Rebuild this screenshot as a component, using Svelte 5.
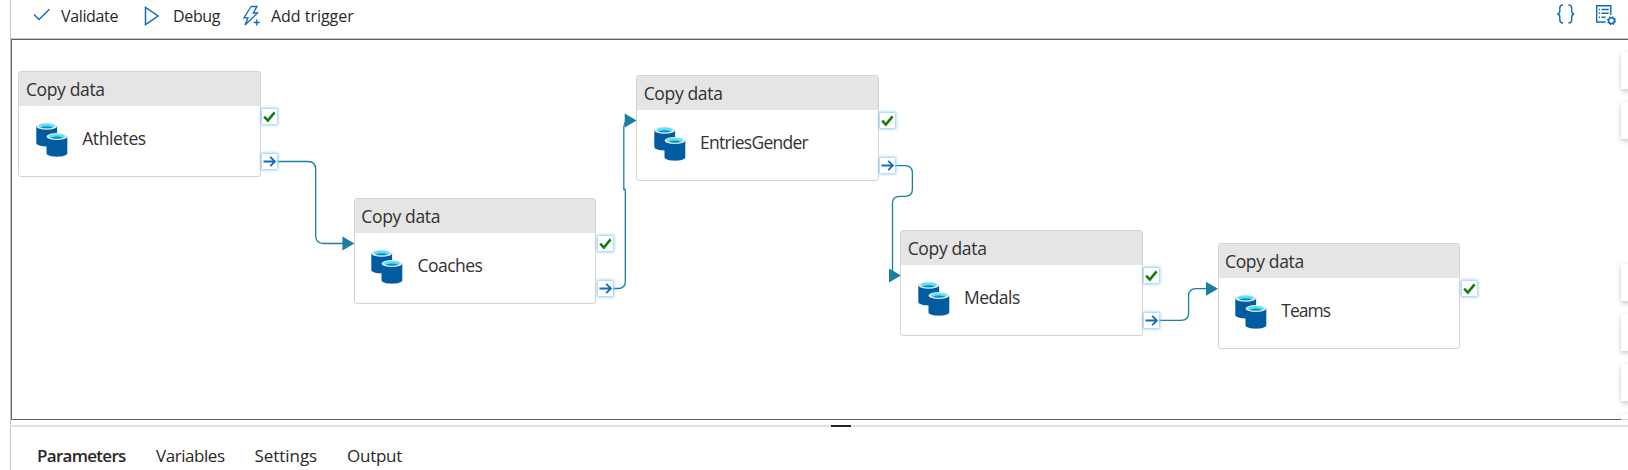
<script>
  const nodes = [
    { name: 'Athletes', x: 18.4, y: 71.3, next: true, track: '-0.38px' },
    { name: 'Coaches', x: 353.8, y: 198.4, next: true, track: '-0.55px' },
    { name: 'EntriesGender', x: 636.2, y: 75.2, next: true, track: '-0.72px' },
    { name: 'Medals', x: 900.2, y: 230.4, next: true, track: '-0.5px' },
    { name: 'Teams', x: 1217.5, y: 243.2, next: false, track: '-1px' }
  ];
  const edges = [
    'M278 161.5H308Q315.7 161.5 315.7 169.5V235.5Q315.7 243.5 323.7 243.5H343',
    'M613 288.5H618Q625.3 288.5 625.3 281V189.5H623.8V128Q623.8 122 628 120.5',
    'M895 165.6H905Q912.4 165.6 912.4 173V189Q912.4 196.4 905 196.4H899.5Q892.5 196.4 892.5 203.5V275',
    'M1159 320.4H1181Q1188.6 320.4 1188.6 313V296Q1188.6 288.6 1196 288.6H1207'
  ];
  const heads = [[342.4, 243.6], [624.7, 120.5], [889, 275.6], [1206, 288.7]];
  const cards = [52, 101.5, 264, 314, 364];
  const tabs = [
    { label: 'Parameters', w: 119, track: '-0.7px' },
    { label: 'Variables', w: 98.5, track: '-0.45px' },
    { label: 'Settings', w: 92.5, track: '-0.05px' },
    { label: 'Output', w: 60, track: '-0.25px' }
  ];
</script>

<div class="page">
  <header class="toolbar">
    <button class="validate">
      <svg width="18" height="14" viewBox="0 0 18 14"><path d="M1 6.5 6 11.5 16.5 1.2" stroke-width="1.4" /></svg>
      <span>Validate</span>
    </button>
    <button class="debug">
      <svg width="16" height="20" viewBox="0 0 16 20"><path d="M1.5 1.4V18.6L14 10Z" stroke-width="1.5" /></svg>
      <span>Debug</span>
    </button>
    <button class="trigger">
      <svg width="20" height="22" viewBox="0 0 20 22"><path d="M9 1.5H15L11.2 8H15.5L3 20 6 12.8H2L9 1.5M14.7 14.5V20.5M11.7 17.5H17.7" stroke-width="1.3" /></svg>
      <span>Add trigger</span>
    </button>
    <div class="tools">
      <svg width="20" height="20" viewBox="0 0 20 20"><path d="M7 1Q3.8 1 3.8 4V7Q3.8 9.7 1.4 10Q3.8 10.3 3.8 13V16Q3.8 19 7 19M12.5 1Q15.7 1 15.7 4V7Q15.7 9.7 18.1 10Q15.7 10.3 15.7 13V16Q15.7 19 12.5 19" stroke-width="1.4" /></svg>
      <svg width="22" height="22" viewBox="0 0 22 22">
        <path d="M10.5 18H1.7V1.7H15.8V11M3.8 5.5H5M6.5 5.5H13.7M3.8 9.3H5M6.5 9.3H13.7M3.8 13.2H5M6.5 13.2H10.5" stroke-width="1.4" />
        <circle cx="16.5" cy="16.7" r="2.9" stroke-width="1.5" />
        <circle cx="16.5" cy="16.7" r="3.9" stroke-width="1.3" stroke-dasharray="1.5 1.563" />
      </svg>
    </div>
  </header>

  <main class="canvas">
    <svg class="edges" width="1628" height="470" viewBox="0 0 1628 470">
      {#each edges as d}<path {d} />{/each}
      {#each heads as [x, y]}<polygon points="{x},{y - 7} {x + 12},{y} {x},{y + 7}" />{/each}
    </svg>
    {#each nodes as n}
      <article class="node" style="left:{n.x}px; top:{n.y}px">
        <h2>Copy data</h2>
        <div class="body">
          <svg width="32" height="36" viewBox="0 0 32 36">
            {#each [[0.3, 0.5], [10.5, 10.8]] as [x, y]}
              <g transform="translate({x} {y})">
                <path d="M0 3.5V20.5C0 25 20.8 25 20.8 20.5V3.5Z" fill="#005ba1" />
                <ellipse cx="10.4" cy="3.7" rx="10.4" ry="3.6" fill="#e8e8e8" />
                <ellipse cx="10.4" cy="3.5" rx="8" ry="2.4" fill="#50e6ff" />
                <path d="M4 4.9Q10.4 2.4 16.8 4.9Q10.4 6.8 4 4.9Z" fill="#198ab3" />
              </g>
            {/each}
          </svg>
          <span style="letter-spacing:{n.track}">{n.name}</span>
        </div>
        <i class="port ok"><svg width="15" height="15" viewBox="0 0 15 15"><path d="M2.2 7.7 5.8 11.6 12.6 3.4" stroke="#107c10" stroke-width="2.5" /></svg></i>
        {#if n.next}
          <i class="port go"><svg width="15" height="15" viewBox="0 0 15 15"><path d="M1.5 7.5H12.8M8.2 2.8 12.9 7.5 8.2 12.2" stroke="#0f6cbd" stroke-width="1.8" /></svg></i>
        {/if}
      </article>
    {/each}
    {#each cards as top}<div class="card" style="top:{top}px"></div>{/each}
    <div class="card cut"></div>
  </main>

  <div class="splitter"><b></b></div>

  <nav>
    {#each tabs as t, i}
      <span class:active={i === 0} style="width:{t.w}px; letter-spacing:{t.track}">{t.label}</span>
    {/each}
  </nav>
</div>

<style>
  :global(body) { margin: 0; background: #fff; overflow: hidden; }
  .page {
    position: relative;
    box-sizing: border-box;
    width: 1628px;
    height: 470px;
    padding-left: 10px;
    overflow: hidden;
    font-family: "Open Sans", "Noto Sans", sans-serif;
    color: #292827;
    display: flex;
    flex-direction: column;
    background: linear-gradient(#c8c6c4, #c8c6c4) 10px 0 / 1px 100% no-repeat;
  }
  .toolbar {
    box-sizing: border-box;
    height: 39px;
    margin-left: 1px;
    border-bottom: 1px solid #c8c6c4;
    display: flex;
    align-items: flex-start;
    padding: 0 11px 0 22px;
  }
  svg { display: block; flex: none; fill: none; stroke: #0f6cbd; }
  button {
    display: flex;
    align-items: center;
    height: 32px;
    padding: 0;
    border: 0;
    background: none;
    font: 16px "Open Sans", "Noto Sans", sans-serif;
    letter-spacing: -0.35px;
    color: #292827;
    white-space: nowrap;
  }
  .validate { width: 111px; gap: 10px; }
  .validate svg { margin-top: -3px; }
  .debug { width: 98px; gap: 13px; }
  .debug svg { margin-top: -1px; }
  .trigger { gap: 9px; letter-spacing: -0.03px; }
  .trigger svg { margin-top: -1px; }
  .tools { display: flex; gap: 19px; margin: 4px 0 0 auto; }
  .canvas {
    height: 379px;
    margin-left: 1px;
    border: 1px solid #605e5c;
    border-right: 0;
  }
  .edges { position: absolute; left: 0; top: 0; pointer-events: none; }
  .edges path { stroke: #1b7fa3; stroke-width: 1.3; }
  .edges polygon { fill: #1b7fa3; stroke: none; }
  .node {
    position: absolute;
    box-sizing: border-box;
    width: 242.6px;
    height: 105.4px;
    border: 1px solid #d4d4d4;
    border-radius: 3px;
    background: #fff;
  }
  h2 {
    margin: 0;
    height: 34px;
    padding-left: 6.5px;
    background: #e5e5e5;
    border-radius: 2px 2px 0 0;
    font-size: 17.5px;
    line-height: 35px;
    font-weight: 400;
    letter-spacing: -0.35px;
    color: #323130;
  }
  .body { display: flex; align-items: center; gap: 14.3px; height: 64px; padding-left: 16.5px; font-size: 17.5px; color: #323130; }
  .body svg { stroke: none; margin-top: 4px; }
  .port {
    position: absolute;
    left: 243px;
    width: 15px;
    height: 15px;
    background: #fff;
    box-shadow: 0 0 3px 1px #8fc4f0;
  }
  .ok { top: 36.5px; }
  .go { top: 81.5px; }
  .card {
    position: absolute;
    left: 1621px;
    width: 36px;
    height: 37px;
    background: #fff;
    box-shadow: 0 2px 5px rgba(0, 0, 0, 0.22);
    clip-path: inset(-3px 0 -8px -8px);
  }
  .cut {
    top: 414px;
    height: 6px;
    box-sizing: border-box;
    border-bottom: 1px solid #d2d0ce;
    clip-path: inset(-3px 0 0 -4px);
    box-shadow: 0 0 4px rgba(0, 0, 0, 0.1);
  }
  .splitter {
    margin-top: 5px;
    height: 2px;
    background: #e1e1e1;
    display: flex;
    padding-left: 821px;
  }
  .splitter b { width: 20px; background: #252423; }
  nav { display: flex; padding: 17px 0 0 27px; font-size: 17px; line-height: 24px; white-space: nowrap; }
  .active { font-weight: 600; }
</style>
